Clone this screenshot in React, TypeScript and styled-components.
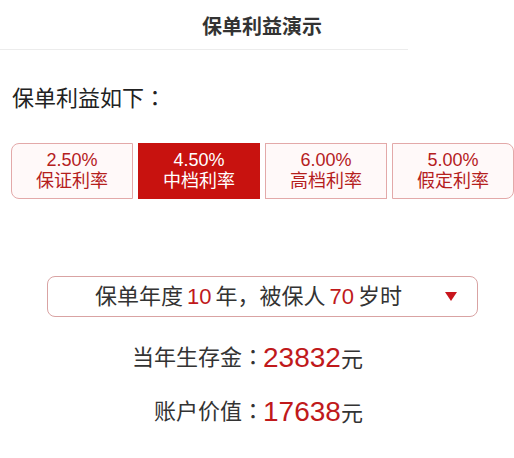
import React, { useState } from "react";
import styled, { createGlobalStyle } from "styled-components";

const GlobalStyle = createGlobalStyle`
  body {
    margin: 0;
    background: #fff;
    font-family: "Liberation Sans", "Noto Sans CJK SC", sans-serif;
    color: #333;
  }
`;

const rates = [
  { rate: "2.50%", name: "保证利率" },
  { rate: "4.50%", name: "中档利率" },
  { rate: "6.00%", name: "高档利率" },
  { rate: "5.00%", name: "假定利率" },
];

const App = () => {
  const [currentTab, setCurrentTab] = useState(1);

  return (
    <Page>
      <GlobalStyle />
      <Header>保单利益演示</Header>
      <Intro>
        保单利益如下<Colon>：</Colon>
      </Intro>
      <TabRow>
        {rates.map((el, idx) => (
          <Tab
            key={idx}
            $active={idx === currentTab}
            $first={idx === 0}
            $last={idx === rates.length - 1}
            onClick={() => setCurrentTab(idx)}
          >
            <span>{el.rate}</span>
            <span>{el.name}</span>
          </Tab>
        ))}
      </TabRow>
      <Picker>
        <PickerText>
          保单年度<PickNum>10</PickNum>年，被保人<PickNum>70</PickNum>岁时
        </PickerText>
        <Arrow viewBox="0 0 12 9">
          <path d="M0 0 H12 L6 9 Z" fill="#c8161d" />
        </Arrow>
      </Picker>
      <Results>
        <Label>
          当年生存金<Colon>：</Colon>
        </Label>
        <Value>
          <Num>23832</Num>元
        </Value>
        <Label>
          账户价值<Colon>：</Colon>
        </Label>
        <Value>
          <Num>17638</Num>元
        </Value>
      </Results>
    </Page>
  );
};

export default App;

const Page = styled.div`
  width: 514px;
  height: 458px;
  overflow: hidden;
`;

const Header = styled.div`
  height: 50px;
  display: flex;
  align-items: center;
  justify-content: center;
  padding-left: 10px;
  font-size: 20px;
  font-weight: bold;
  color: #333;
  background: linear-gradient(#ececec, #ececec) left bottom / 408px 1px no-repeat;
`;

/* full-width colon centred in its box, as in the reference */
const Colon = styled.span`
  font-family: "Liberation Sans", "Noto Sans CJK TC", sans-serif;
`;

const Intro = styled.div`
  margin-top: 35px;
  padding-left: 12px;
  font-size: 22px;
  line-height: 28px;
  color: #222;
`;

const TabRow = styled.div`
  display: grid;
  grid-template-columns: repeat(4, 122px);
  gap: 5px;
  margin-top: 30px;
  padding-left: 11px;
`;

const Tab = styled.div<{ $active: boolean; $first: boolean; $last: boolean }>`
  height: 56px;
  box-sizing: border-box;
  display: flex;
  flex-direction: column;
  align-items: center;
  justify-content: center;
  font-size: 18px;
  line-height: 21px;
  cursor: pointer;
  border: 1px solid ${(p) => (p.$active ? "#c8120f" : "#e3a9a9")};
  background: ${(p) => (p.$active ? "#c8120f" : "#fff9f9")};
  color: ${(p) => (p.$active ? "#fff" : "#b5201d")};
  border-radius: ${(p) =>
    p.$first ? "8px 0 0 8px" : p.$last ? "0 8px 8px 0" : "0"};
`;

const Picker = styled.div`
  margin: 77px 0 0 47px;
  width: 431px;
  height: 41px;
  box-sizing: border-box;
  border: 1px solid #d9a3a3;
  border-radius: 8px;
  display: flex;
  align-items: center;
  padding: 0 20px 0 47px;
`;

const PickerText = styled.div`
  flex: 1;
  font-size: 22px;
  line-height: 28px;
  color: #333;
`;

const PickNum = styled.span`
  color: #c0191b;
  margin: 0 4px;
`;

const Arrow = styled.svg`
  width: 12px;
  height: 9px;
`;

const Results = styled.div`
  display: grid;
  grid-template-columns: 264px 1fr;
  row-gap: 20px;
  margin-top: 25px;
`;

const Label = styled.div`
  text-align: right;
  font-size: 22px;
  line-height: 32px;
  color: #333;
`;

const Value = styled.div`
  font-size: 22px;
  line-height: 32px;
  color: #333;
  margin-left: -1px;
`;

const Num = styled.span`
  font-size: 28px;
  color: #c0191b;
`;
